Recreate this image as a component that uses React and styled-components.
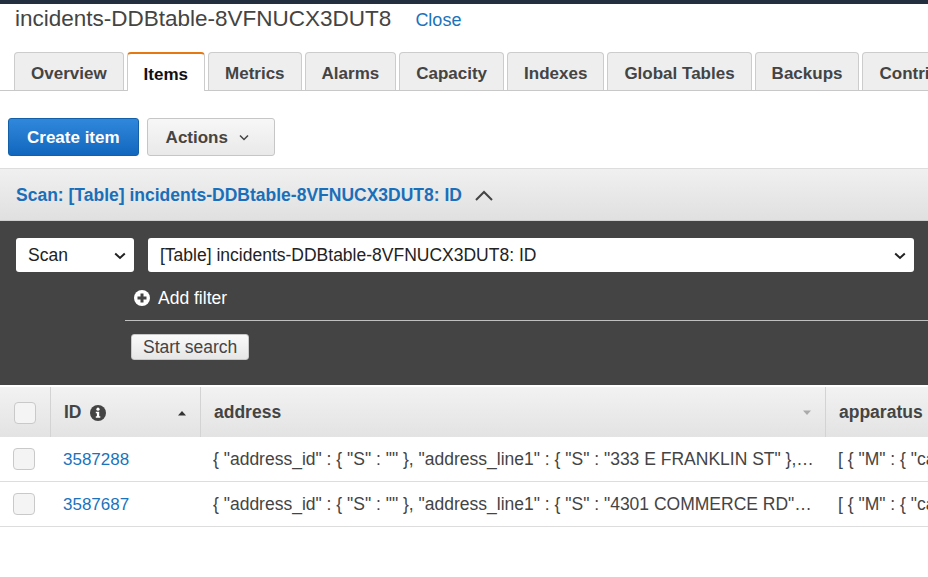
import React from "react";
import styled, { createGlobalStyle, css } from "styled-components";

const Global = createGlobalStyle`
  html, body { margin: 0; padding: 0; background: #fff; overflow: hidden; }
  body { font-family: "Liberation Sans", Arial, sans-serif; color: #444; }
  * { box-sizing: border-box; }
`;

const Page = styled.div`
  width: 928px;
  height: 577px;
  overflow: hidden;
  background: #fff;
`;

const TopBar = styled.div`
  height: 4px;
  background: #232f3e;
`;

const Header = styled.div`
  height: 48px;
  padding: 1px 15px 0;
  display: flex;
  align-items: baseline;
  gap: 24px;
  white-space: nowrap;
`;

const Title = styled.h1`
  margin: 0;
  font-weight: normal;
  font-size: 22.5px;
  line-height: 27px;
  color: #444;
`;

const CloseLink = styled.a`
  font-size: 18px;
  color: #1a73bc;
  text-decoration: none;
`;

const TabBar = styled.div`
  display: flex;
  align-items: flex-end;
  gap: 3px;
  padding-left: 14px;
  height: 39px;
  border-bottom: 1px solid #c8c8c8;
  white-space: nowrap;
`;

const Tab = styled.div`
  flex-shrink: 0;
  height: 38px;
  padding: 4px 16px 0;
  display: flex;
  align-items: center;
  font-size: 17px;
  font-weight: bold;
  color: #444;
  background: #eee;
  border: 1px solid #ccc;
  border-bottom: none;
  border-radius: 4px 4px 0 0;
  ${(p) =>
    p.$active &&
    css`
      background: #fff;
      color: #111;
      height: 39px;
      margin-bottom: -1px;
      border-top: 2px solid #e47911;
      padding-top: 4px;
    `}
`;

const ActionRow = styled.div`
  display: flex;
  gap: 8px;
  padding: 27px 8px 12px;
  border-bottom: 1px solid #ddd;
`;

const Button = styled.button`
  height: 38px;
  padding: 1px ${(p) => (p.$primary ? "18px" : "25px")} 0 18px;
  font-family: inherit;
  font-size: 17px;
  font-weight: bold;
  border-radius: 3px;
  display: flex;
  align-items: center;
  gap: 11px;
  cursor: pointer;
  ${(p) =>
    p.$primary
      ? css`
          color: #fff;
          background: linear-gradient(#3088dc, #1167bd);
          border: 1px solid #135fa8;
        `
      : css`
          color: #444;
          background: linear-gradient(#f7f7f7, #e9e9e9);
          border: 1px solid #c6c6c6;
        `}
`;

const ScanHeader = styled.div`
  height: 52px;
  display: flex;
  align-items: center;
  gap: 13px;
  padding: 2px 0 0 16px;
  background: linear-gradient(#f0f0f0, #e0e0e0);
  border-bottom: 1px solid #cfcfcf;
  white-space: nowrap;
`;

const ScanTitle = styled.span`
  font-size: 17.5px;
  font-weight: bold;
  color: #1a6fba;
`;

const Panel = styled.div`
  background: #444;
  padding: 17px 0 25px 16px;
`;

const SelectRow = styled.div`
  display: flex;
  gap: 14px;
  margin-right: 14px;
`;

const Select = styled.div`
  height: 34px;
  width: ${(p) => p.$width || "auto"};
  flex: ${(p) => (p.$grow ? 1 : "none")};
  background: #fff;
  border-radius: 3px;
  display: flex;
  align-items: center;
  justify-content: space-between;
  padding: 1px 8px 0 12px;
  font-size: 17.5px;
  color: #222;
  white-space: nowrap;
`;

const FilterArea = styled.div`
  margin-left: 109px;
`;

const AddFilter = styled.div`
  height: 49px;
  display: flex;
  align-items: center;
  gap: 8px;
  padding-left: 9px;
  padding-top: 4px;
  color: #fff;
  font-size: 17.5px;
  border-bottom: 1px solid #c0c0c0;
`;

const SmallButton = styled.button`
  margin: 13px 0 0 6px;
  height: 26px;
  padding: 1px 11px 0;
  font-family: inherit;
  font-size: 17.5px;
  color: #444;
  background: linear-gradient(#fafafa, #e6e6e6);
  border: 1px solid #c8c8c8;
  border-radius: 3px;
  display: flex;
  align-items: center;
`;

const Grid = styled.div`
  display: grid;
  grid-template-columns: 50px 150px 625px 220px;
  width: 1045px;
  margin-top: 2px;
`;

const HeadCell = styled.div`
  height: 50px;
  display: flex;
  align-items: center;
  gap: 8px;
  padding: 1px ${(p) => (p.$check ? "0" : "13px")} 0;
  justify-content: ${(p) => (p.$check ? "center" : "flex-start")};
  background: linear-gradient(#f2f2f2, #e3e3e3);
  border-left: ${(p) => (p.$first ? "none" : "1px solid #d3d3d3")};
  font-size: 17.5px;
  font-weight: bold;
  color: #444;
  white-space: nowrap;
`;

const Spacer = styled.span`
  flex: 1;
`;

const Cell = styled.div`
  height: 45px;
  display: flex;
  align-items: center;
  padding: ${(p) => (p.$check ? "0 0 0 13px" : "1px 10px 0 13px")};
  border-bottom: 1px solid #ddd;
  font-size: 17.5px;
  color: #444;
  min-width: 0;
  white-space: nowrap;
  overflow: hidden;
`;

const Ellipsis = styled.span`
  overflow: hidden;
  text-overflow: ellipsis;
  white-space: nowrap;
  min-width: 0;
`;

const IdLink = styled.a`
  color: #1a73bc;
  text-decoration: none;
  font-size: 17px;
`;

const Checkbox = styled.span`
  width: 22px;
  height: 22px;
  border: 1px solid #c9c9c9;
  border-radius: 4px;
  background: #f4f4f4;
  flex-shrink: 0;
`;

const ChevronDownSmall = () => (
  <svg width="10" height="7" viewBox="0 0 10 7">
    <path d="M1 1.5 L5 5.5 L9 1.5" fill="none" stroke="#444" strokeWidth="1.5" />
  </svg>
);

const SelectChevron = () => (
  <svg width="12" height="8" viewBox="0 0 12 8">
    <path d="M1.2 1.5 L6 6 L10.8 1.5" fill="none" stroke="#222" strokeWidth="2" />
  </svg>
);

const ChevronUp = () => (
  <svg width="18" height="11" viewBox="0 0 18 11">
    <path d="M1 10 L9 2 L17 10" fill="none" stroke="#444" strokeWidth="2" />
  </svg>
);

const PlusCircle = () => (
  <svg width="16" height="16" viewBox="0 0 16 16">
    <circle cx="8" cy="8" r="8" fill="#fff" />
    <rect x="3.5" y="6.5" width="9" height="3" fill="#444" />
    <rect x="6.5" y="3.5" width="3" height="9" fill="#444" />
  </svg>
);

const InfoIcon = () => (
  <svg width="16" height="16" viewBox="0 0 16 16">
    <circle cx="8" cy="8" r="8" fill="#444" />
    <circle cx="8" cy="4.2" r="1.6" fill="#fff" />
    <path d="M5.8 6.8 H9.2 V11.3 H10.3 V12.8 H5.8 V11.3 H6.9 V8.3 H5.8 Z" fill="#fff" />
  </svg>
);

const SortUp = () => (
  <svg width="10" height="6" viewBox="0 0 10 6">
    <path d="M1 5.5 L5 1 L9 5.5 Z" fill="#333" />
  </svg>
);

const SortDown = () => (
  <svg width="10" height="6" viewBox="0 0 10 6">
    <path d="M1 0.5 L9 0.5 L5 5 Z" fill="#aaa" />
  </svg>
);

const tabs = ["Overview", "Items", "Metrics", "Alarms", "Capacity", "Indexes", "Global Tables", "Backups", "Contributor Insights"];

const rows = [
  {
    id: "3587288",
    address:
      '{ "address_id" : { "S" : "" }, "address_line1" : { "S" : "333 E FRANKLIN ST" }, "address_line2" : { "S" : "" }, "city" : { "S" : "RICHMOND" } }',
    apparatus: '[ { "M" : { "car_id" : { "S" : "E5" } } } ]',
  },
  {
    id: "3587687",
    address:
      '{ "address_id" : { "S" : "" }, "address_line1" : { "S" : "4301 COMMERCE RD" }, "address_line2" : { "S" : "" }, "city" : { "S" : "RICHMOND" } }',
    apparatus: '[ { "M" : { "car_id" : { "S" : "E8" } } } ]',
  },
];

export default function App() {
  return (
    <Page>
      <Global />
      <TopBar />
      <Header>
        <Title>incidents-DDBtable-8VFNUCX3DUT8</Title>
        <CloseLink href="#">Close</CloseLink>
      </Header>
      <TabBar>
        {tabs.map((t) => (
          <Tab key={t} $active={t === "Items"}>
            {t}
          </Tab>
        ))}
      </TabBar>
      <ActionRow>
        <Button $primary>Create item</Button>
        <Button>
          Actions <ChevronDownSmall />
        </Button>
      </ActionRow>
      <ScanHeader>
        <ScanTitle>Scan: [Table] incidents-DDBtable-8VFNUCX3DUT8: ID</ScanTitle>
        <ChevronUp />
      </ScanHeader>
      <Panel>
        <SelectRow>
          <Select $width="118px">
            Scan <SelectChevron />
          </Select>
          <Select $grow>
            [Table] incidents-DDBtable-8VFNUCX3DUT8: ID <SelectChevron />
          </Select>
        </SelectRow>
        <FilterArea>
          <AddFilter>
            <PlusCircle />
            Add filter
          </AddFilter>
          <SmallButton>Start search</SmallButton>
        </FilterArea>
      </Panel>
      <Grid>
        <HeadCell $check $first>
          <Checkbox />
        </HeadCell>
        <HeadCell>
          ID <InfoIcon />
          <Spacer />
          <SortUp />
        </HeadCell>
        <HeadCell>
          address
          <Spacer />
          <SortDown />
        </HeadCell>
        <HeadCell>apparatus</HeadCell>
        {rows.map((r) => (
          <React.Fragment key={r.id}>
            <Cell $check>
              <Checkbox />
            </Cell>
            <Cell>
              <IdLink href="#">{r.id}</IdLink>
            </Cell>
            <Cell>
              <Ellipsis>{r.address}</Ellipsis>
            </Cell>
            <Cell>{r.apparatus}</Cell>
          </React.Fragment>
        ))}
      </Grid>
    </Page>
  );
}
